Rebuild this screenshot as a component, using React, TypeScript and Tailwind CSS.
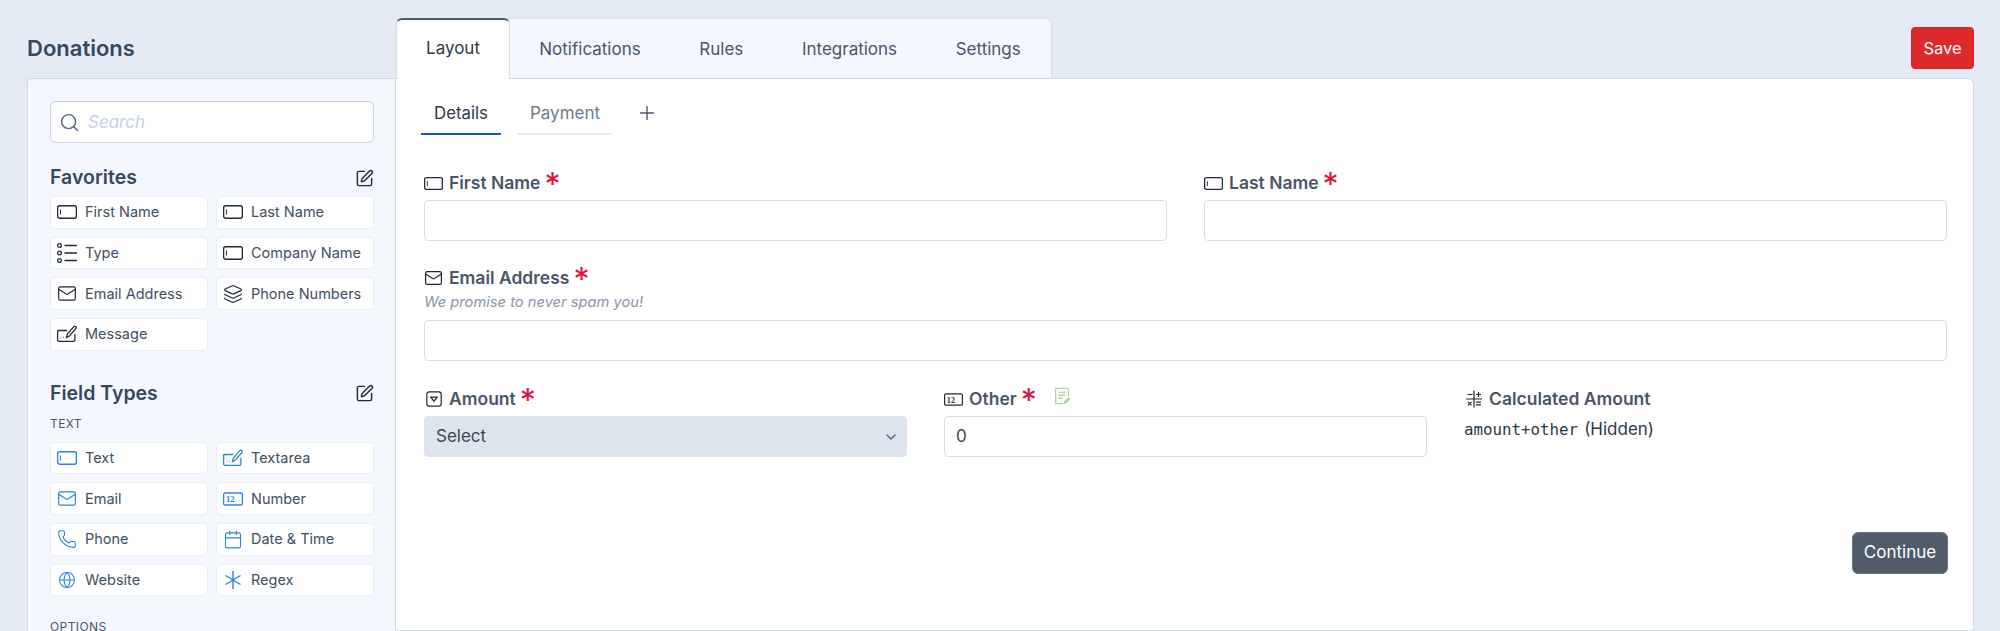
import type { ReactNode } from "react";
import { Search, SquarePen, Mail, Layers, Phone, Calendar, Globe, Plus, ChevronDown } from "lucide-react";

const FONT = "font-['Inter','Noto_Sans',sans-serif]";

function TextIcon({ className = "w-5 h-5" }: { className?: string }) {
  return (
    <svg viewBox="0 0 20 20" fill="none" stroke="currentColor" className={className}>
      <rect x="0.6" y="3.8" width="18.8" height="12.4" rx="2" strokeWidth="1.4" />
      <path d="M3.5 7.5v5" strokeWidth="1" />
    </svg>
  );
}

function ListIcon({ className = "w-5 h-5" }: { className?: string }) {
  return (
    <svg viewBox="0 0 20 20" fill="none" stroke="currentColor" strokeWidth="1.3" className={className}>
      <circle cx="2.5" cy="2.5" r="1.9" />
      <circle cx="2.5" cy="10" r="1.9" />
      <circle cx="2.5" cy="17.5" r="1.9" />
      <path d="M7.5 2.5H20M7.5 10H20M7.5 17.5H20" strokeWidth="1.5" />
    </svg>
  );
}

function TextareaIcon({ className = "w-5 h-5" }: { className?: string }) {
  return (
    <svg viewBox="0 0 20 20" fill="none" stroke="currentColor" strokeWidth="1.3" className={className}>
      <path d="M10 6.5H2a1.4 1.4 0 0 0-1.4 1.4v8A1.4 1.4 0 0 0 2 17.3h14.5a1.4 1.4 0 0 0 1.4-1.4V10" />
      <path d="M3.6 13.5h.6M6.2 13.5h.6" />
      <path d="M9.5 13.5l.8-3.5 6.6-7.4a1.4 1.4 0 0 1 2.1 1.8l-6.3 7.3z" />
    </svg>
  );
}

function NumberIcon({ className = "w-5 h-5" }: { className?: string }) {
  return (
    <svg viewBox="0 0 20 20" fill="none" className={className}>
      <rect x="0.6" y="4" width="18.8" height="12" rx="1.6" stroke="currentColor" strokeWidth="1.3" />
      <text x="3" y="13.4" fontSize="8.5" fontWeight="700" fontFamily="'Liberation Serif', serif" fill="currentColor">12</text>
    </svg>
  );
}

function RegexIcon({ className = "w-5 h-5" }: { className?: string }) {
  return (
    <svg viewBox="0 0 20 20" fill="none" stroke="currentColor" strokeWidth="1.4" className={className}>
      <path d="M10 1v18M2.5 5.5l15 9M17.5 5.5l-15 9" />
    </svg>
  );
}

function DropdownIcon({ className = "w-4 h-4" }: { className?: string }) {
  return (
    <svg viewBox="0 0 16 16" fill="none" stroke="currentColor" strokeWidth="1.2" className={className}>
      <rect x="0.8" y="0.8" width="14.4" height="14.4" rx="2.4" />
      <path d="M4.8 6.2h6.4L8 10.2z" />
    </svg>
  );
}

function CalcIcon() {
  return (
    <svg viewBox="0 0 16 18" fill="none" stroke="#1f2937" strokeWidth="1.2" className="h-[18px] w-4">
      <path d="M8 0.5v17M0 9h16" />
      <path d="M1.5 4.5h5M10 4.5h5M12.5 2v5M2 11.8l3.5 3.5M5.5 11.8L2 15.3M10 12.2h5M10 14.8h5" />
    </svg>
  );
}

function NoteIcon() {
  return (
    <svg viewBox="0 0 14 16" fill="none" stroke="#9ccc8a" strokeWidth="1" className="h-[18px] w-[15px]">
      <path d="M12.5 8V2a1.3 1.3 0 0 0-1.3-1.3H2A1.3 1.3 0 0 0 .7 2v12A1.3 1.3 0 0 0 2 15.3h6" />
      <path d="M3.2 4.5h6.6M3.2 7.2h6.6M3.2 10h4" />
      <path d="M9 14.5l1.2-.3 3.4-3.4-1-1-3.4 3.4z" />
    </svg>
  );
}

function Chip({ icon, label }: { icon: ReactNode; label: string }) {
  return (
    <div className="flex h-[32.67px] items-center gap-[8px] rounded border border-[#e8edf6] bg-white pl-[6px] text-[14.5px] text-[#414f60]">
      <span className="flex h-5 w-5 shrink-0 items-center justify-center">{icon}</span>
      {label}
    </div>
  );
}

function Label({ icon, text, required = true, extra }: { icon: ReactNode; text: string; required?: boolean; extra?: ReactNode }) {
  return (
    <div className="flex h-[24px] items-center">
      <span className="mr-[6px] flex w-[19px] shrink-0 items-center justify-center text-[#1f2937]">{icon}</span>
      <span className="text-[17.5px] font-semibold text-[#4a5568]">{text}</span>
      {required && <span className="mt-[4px] ml-[4px] text-[32px] leading-none font-normal text-[#e30f3f]">*</span>}
      {extra}
    </div>
  );
}

const blue = "text-[#2b82e6]";
const black = "text-[#1f2937]";
const fieldBox = "flex h-[41px] items-center rounded border px-[11px] text-[17px] text-[#3d4852]";

const favorites = [
  { label: "First Name", icon: <TextIcon className={`h-5 w-5 ${black}`} /> },
  { label: "Last Name", icon: <TextIcon className={`h-5 w-5 ${black}`} /> },
  { label: "Type", icon: <ListIcon className={`h-5 w-5 ${black}`} /> },
  { label: "Company Name", icon: <TextIcon className={`h-5 w-5 ${black}`} /> },
  { label: "Email Address", icon: <Mail size={23} strokeWidth={1.4} className={black} /> },
  { label: "Phone Numbers", icon: <Layers size={22} strokeWidth={1.4} className={black} /> },
  { label: "Message", icon: <TextareaIcon className={`h-5 w-5 ${black}`} /> },
];

const fieldTypes = [
  { label: "Text", icon: <TextIcon className={`h-5 w-5 ${blue}`} /> },
  { label: "Textarea", icon: <TextareaIcon className={`h-5 w-5 ${blue}`} /> },
  { label: "Email", icon: <Mail size={23} strokeWidth={1.4} className={blue} /> },
  { label: "Number", icon: <NumberIcon className={`h-5 w-5 ${blue}`} /> },
  { label: "Phone", icon: <Phone size={22} strokeWidth={1.3} className={blue} /> },
  { label: "Date & Time", icon: <Calendar size={23} strokeWidth={1.3} className={blue} /> },
  { label: "Website", icon: <Globe size={18} strokeWidth={1.4} className={blue} /> },
  { label: "Regex", icon: <RegexIcon className={`h-5 w-5 ${blue}`} /> },
];

const tabs = ["Notifications", "Rules", "Integrations", "Settings"];

export default function App() {
  return (
    <div className={`${FONT} flex h-[631px] overflow-hidden bg-[#e5ebf5] pl-[27px] pr-[26px]`}>
      {/* left column */}
      <div className="flex w-[369px] shrink-0 flex-col">
        <h1 className="flex h-[78px] shrink-0 items-center pt-[18px] text-[22px] font-semibold text-[#34495e]">Donations</h1>
        <div className="flex-1 rounded-tl border-t border-l border-[#d0d9e8] bg-[#f4f7fe] pt-[22px] pl-[22px] pr-[22px]">
          <div className="flex h-[42px] items-center rounded-md border border-[#cbd5e6] bg-white pl-[8px] text-[17px] text-[#c3d1e2] italic">
            <Search size={21} strokeWidth={1.7} className="mr-[8px] text-[#5d6b7c]" />
            <span className="pt-[2px]">Search</span>
          </div>
          <div className="mt-[23px] mb-[6px] flex h-[24px] items-center justify-between">
            <h2 className="text-[19.5px] font-semibold text-[#34495e]">Favorites</h2>
            <SquarePen size={19} strokeWidth={1.8} className="text-[#1f2937]" />
          </div>
          <div className="grid grid-cols-2 gap-2">
            {favorites.map((f) => (
              <Chip key={f.label} icon={f.icon} label={f.label} />
            ))}
          </div>
          <div className="mt-[31px] flex h-[24px] items-center justify-between">
            <h2 className="text-[19.5px] font-semibold text-[#34495e]">Field Types</h2>
            <SquarePen size={19} strokeWidth={1.8} className="text-[#1f2937]" />
          </div>
          <div className="mt-[10px] mb-[10px] text-[12px] leading-[16px] tracking-[0.4px] text-[#4a5568]">TEXT</div>
          <div className="grid grid-cols-2 gap-2">
            {fieldTypes.map((f) => (
              <Chip key={f.label} icon={f.icon} label={f.label} />
            ))}
          </div>
          <div className="mt-[23px] text-[12px] leading-[16px] tracking-[0.4px] text-[#4a5568]">OPTIONS</div>
        </div>
      </div>

      {/* right column */}
      <div className="flex min-w-0 flex-1 flex-col">
        <div className="flex h-[78px] shrink-0 items-start justify-between">
          <div className="mt-[18px] flex h-[61px] rounded-t-md border-t border-r border-[#d5deea] bg-[#f4f7fe] text-[17px] text-[#4a5568]">
            <div className="relative z-10 -mt-px flex h-[61px] w-[114px] items-center justify-center rounded-t-md border-t-[2px] border-r border-l border-t-[#4f5d6f] border-r-[#d5deea] border-l-[#d5deea] bg-white pb-[1px] text-[#2d3748]">
              Layout
            </div>
            <div className="flex pr-[1px]">
              {tabs.map((t) => (
                <div key={t} className="flex items-center px-[29.3px] pt-[1px]">{t}</div>
              ))}
            </div>
          </div>
          <button className="mt-[27px] flex h-[42px] w-[63px] items-center justify-center rounded border border-[#e7192a] bg-[#dd2a2c] text-[16.5px] text-white">
            Save
          </button>
        </div>
        <div className="-ml-px flex-1 rounded-tr-md border border-[#d0d9e8] bg-white pr-[26px] pl-[28px]">
          <div className="flex items-center pt-[19px]">
            <div className="-ml-[3px] flex h-[37px] w-[80px] items-start justify-center border-b-2 border-[#1d4ed8] pt-[3px] text-[16.8px] text-[#2d3748]">Details</div>
            <div className="ml-[17px] flex h-[37px] w-[94px] items-start justify-center border-b-2 border-[#e5ebf5] pt-[3px] text-[17px] text-[#6b7a8c]">Payment</div>
            <Plus size={22} strokeWidth={1.5} className="-mt-[8px] ml-[24px] text-[#4a5568]" />
          </div>
          <div className="mt-[36px] grid grid-cols-2 gap-x-[37px]">
            <div>
              <Label icon={<TextIcon className="h-[19px] w-[19px]" />} text="First Name" />
              <div className={`${fieldBox} mt-[5px] border-[#d5deea] bg-white`} />
            </div>
            <div>
              <Label icon={<TextIcon className="h-[19px] w-[19px]" />} text="Last Name" />
              <div className={`${fieldBox} mt-[5px] border-[#d5deea] bg-white`} />
            </div>
          </div>
          <div className="mt-[25px]">
            <Label icon={<Mail size={20} strokeWidth={1.6} />} text="Email Address" />
            <p className="mt-[3px] text-[14.7px] leading-[18px] text-[#8795a8] italic">We promise to never spam you!</p>
            <div className={`${fieldBox} mt-[9px] border-[#d5deea] bg-white`} />
          </div>
          <div className="mt-[26px] grid grid-cols-3 gap-x-[37px]">
            <div>
              <Label icon={<DropdownIcon className="h-4 w-4" />} text="Amount" />
              <div className={`${fieldBox} mt-[5px] justify-between border-[#dfe5ee] bg-[#dfe5ee] pr-[7px]`}>
                Select
                <ChevronDown size={16} strokeWidth={2.4} className="text-[#5f6c7b]" />
              </div>
            </div>
            <div>
              <Label
                icon={<NumberIcon className="h-[19px] w-[19px]" />}
                text="Other"
                extra={<span className="-mt-[6px] ml-[18px]"><NoteIcon /></span>}
              />
              <div className={`${fieldBox} mt-[5px] border-[#d5deea] bg-white`}>0</div>
            </div>
            <div>
              <Label icon={<CalcIcon />} text="Calculated Amount" required={false} />
              <div className="mt-[6px] flex items-baseline text-[#2d3748]">
                <span className="font-['DejaVu_Sans_Mono',monospace] text-[15.8px]">amount+other</span>
                <span className="ml-[6px] text-[17px]">(Hidden)</span>
              </div>
            </div>
          </div>
          <div className="mt-[75px] -mr-px flex justify-end">
            <button className="flex h-[42px] w-[96px] items-center justify-center rounded-md border border-[#6b7785] bg-[#505c69] text-[17px] text-white">
              Continue
            </button>
          </div>
        </div>
      </div>
    </div>
  );
}
